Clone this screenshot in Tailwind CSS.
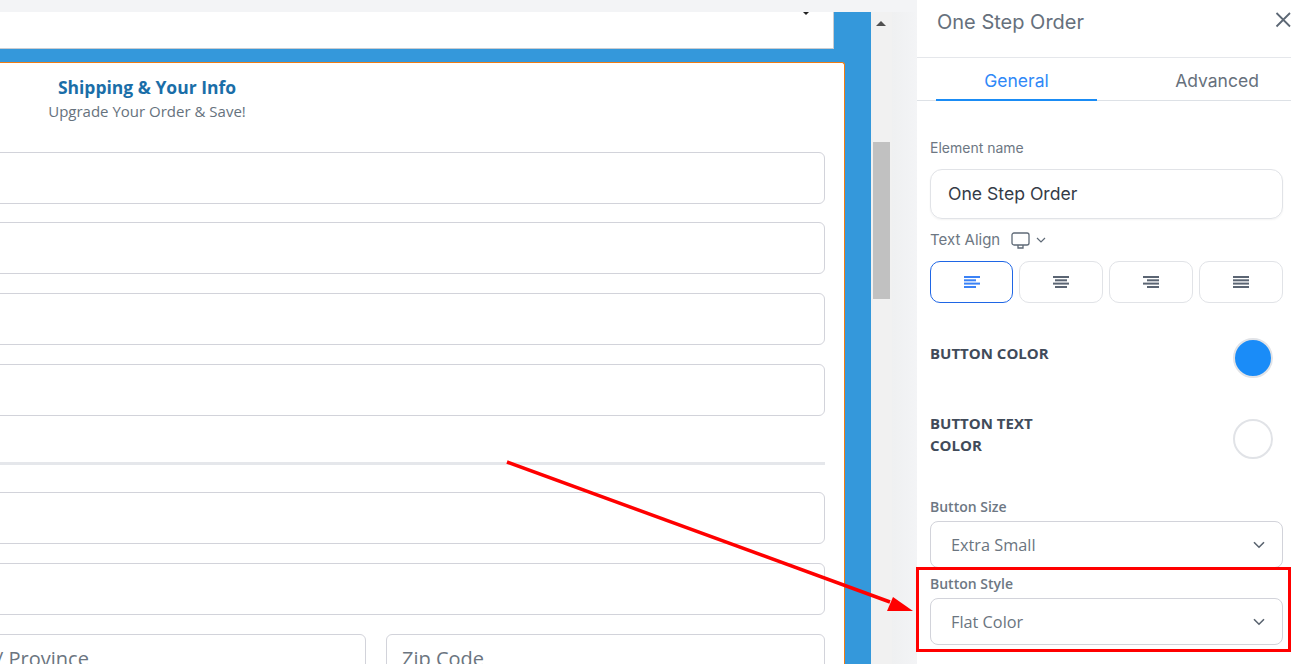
<!DOCTYPE html>
<html lang="en">
  <head>
    <meta charset="UTF-8" />
    <meta name="viewport" content="width=device-width, initial-scale=1.0" />
    <title>One Step Order</title>
    <script src="https://cdn.jsdelivr.net/npm/@tailwindcss/browser@4"></script>
  </head>
  <body class="h-[664px] overflow-hidden bg-white">
    <div class="relative flex h-[664px] w-[1291px] overflow-hidden">
      <!-- Builder canvas -->
      <div class="flex h-full w-[917px] shrink-0 flex-col overflow-hidden bg-[#f3f4f6] pt-3">
        <div class="flex min-h-0 flex-1">
          <div class="w-[871px] shrink-0 overflow-hidden bg-[#3498db] font-['Open_Sans',sans-serif]">
            <div class="relative h-[37px] w-[834px] border-r border-b border-[#c9ccd1] bg-white">
              <span class="absolute top-0 left-[803px] h-0 w-0 border-x-[3.5px] border-t-[3.5px] border-x-transparent border-t-[#222]"></span>
            </div>
            <div class="mt-[13px] -ml-[551px] h-[700px] w-[1396px] rounded-t-[3px] border-t border-r border-[#f07c13] bg-white pt-[11px] pr-[19px] pl-5">
              <h2 class="text-center text-[17.5px] leading-[26px] font-bold text-[#1a6ea8]">Shipping &amp; Your Info</h2>
              <p class="text-center text-[15px] leading-[22px] text-[#66727d]">Upgrade Your Order &amp; Save!</p>
              <div class="mt-[30px] flex flex-col gap-[19px]">
                <div class="-mb-px h-[52px] rounded-md border border-[#d2d3da]"></div>
                <div class="h-[52px] rounded-md border border-[#d2d3da]"></div>
                <div class="h-[52px] rounded-md border border-[#d2d3da]"></div>
                <div class="h-[52px] rounded-md border border-[#d2d3da]"></div>
              </div>
              <div class="mt-[46px] h-[3px] bg-[#e5e7eb]"></div>
              <div class="mt-[27px] flex flex-col gap-[19px]">
                <div class="h-[52px] rounded-md border border-[#d2d3da]"></div>
                <div class="h-[52px] rounded-md border border-[#d2d3da]"></div>
                <div class="flex justify-between">
                  <div class="h-[52px] w-[897px] rounded-md border border-[#d2d3da] pt-[9px] pl-[526px] text-[20px] whitespace-nowrap text-[#6b7580]">/ Province</div>
                  <div class="h-[52px] w-[439px] rounded-md border border-[#d2d3da] pt-[9px] pl-[15px] text-[20px] whitespace-nowrap text-[#6b7580]">Zip Code</div>
                </div>
              </div>
            </div>
          </div>
          <!-- Scrollbar -->
          <div class="relative w-[21px] shrink-0 bg-[#f1f1f1]">
            <span class="absolute top-[9px] left-[5px] h-0 w-0 border-x-[5px] border-b-[5px] border-x-transparent border-b-[#505050]"></span>
            <div class="absolute top-[130px] left-[2px] h-[157px] w-[17px] bg-[#c1c1c1]"></div>
          </div>
          <div class="flex-1 bg-linear-to-r from-[#eff0f1] to-[#f3f4f6]"></div>
        </div>
      </div>

      <!-- Settings panel -->
      <aside class="h-full min-w-0 flex-1 overflow-hidden bg-white font-['Inter',sans-serif]">
        <header class="relative h-[58px] border-b border-[#e5e7eb] pt-[9px] pl-5 text-[20px] leading-[26px] text-[#66707c]">
          One Step Order
          <svg class="absolute top-[12px] right-0 h-4 w-4 text-[#5d6875]" viewBox="0 0 16 16" fill="none" stroke="currentColor" stroke-width="1.8">
            <path d="M1.5 1L15 14.5M15 1L1.5 14.5" />
          </svg>
        </header>
        <nav class="flex h-[43px] border-b border-[#dde1e6] pl-[19px] text-[17.5px]">
          <div class="h-[43px] w-[161px] shrink-0 border-b-2 border-[#1a8cf5] pt-[10px] text-center text-[#2f88f7]">General</div>
          <div class="h-[42px] w-[240px] shrink-0 pt-[10px] text-center text-[#66707c]">Advanced</div>
        </nav>

        <div class="pr-2 pl-[13px]">
          <label class="mt-[38px] block text-[14px] leading-[18px] text-[#6d7783]">Element name</label>
          <div class="mt-[12px] flex h-[50px] items-center rounded-xl border border-[#e1e3e7] pt-px pl-[17px] text-[17.6px] text-[#343b47] shadow-xs">One Step Order</div>

          <div class="mt-[11px] flex h-[20px] items-center text-[15px] text-[#6d7783]">
            <span>Text Align</span>
            <svg class="ml-[11px] h-[17px] w-[19px]" viewBox="0 0 19 17" fill="none" stroke="#5f6a77" stroke-width="1.3">
              <rect x="1" y="1" width="17" height="12" rx="2" />
              <path d="M7 13v3h5v-3" />
            </svg>
            <svg class="ml-[6px] h-[6px] w-[10px]" viewBox="0 0 10 6" fill="none" stroke="#5f6a77" stroke-width="1.2">
              <path d="M1 1l4 4 4-4" />
            </svg>
          </div>

          <div class="mt-[11px] flex gap-[6px]">
            <div class="flex h-[42px] w-[83px] items-center justify-center rounded-[10px] border border-[#1f66e5]">
              <svg class="h-3 w-4" viewBox="0 0 16 12" fill="#3b82f6"><rect y="0" width="16" height="2" /><rect y="3.3" width="12" height="2" /><rect y="6.6" width="16" height="2" /><rect y="10" width="12" height="2" /></svg>
            </div>
            <div class="flex h-[42px] w-[84px] items-center justify-center rounded-[10px] border border-[#e1e3e7]">
              <svg class="h-3 w-4" viewBox="0 0 16 12" fill="#5b6573"><rect y="0" width="16" height="2" /><rect x="2" y="3.3" width="12" height="2" /><rect y="6.6" width="16" height="2" /><rect x="2" y="10" width="12" height="2" /></svg>
            </div>
            <div class="flex h-[42px] w-[84px] items-center justify-center rounded-[10px] border border-[#e1e3e7]">
              <svg class="h-3 w-4" viewBox="0 0 16 12" fill="#5b6573"><rect y="0" width="16" height="2" /><rect x="4" y="3.3" width="12" height="2" /><rect y="6.6" width="16" height="2" /><rect x="4" y="10" width="12" height="2" /></svg>
            </div>
            <div class="flex h-[42px] w-[84px] items-center justify-center rounded-[10px] border border-[#e1e3e7]">
              <svg class="h-3 w-4" viewBox="0 0 16 12" fill="#5b6573"><rect y="0" width="16" height="2" /><rect y="3.3" width="16" height="2" /><rect y="6.6" width="16" height="2" /><rect y="10" width="16" height="2" /></svg>
            </div>
          </div>

          <div class="font-['Open_Sans',sans-serif]">
            <div class="mt-[35px] flex items-start justify-between pr-[10px]">
              <span class="pt-[4px] text-[15px] leading-[22px] font-bold text-[#414b5a]">BUTTON COLOR</span>
              <span class="h-10 w-10 rounded-full border-2 border-[#e1e3e7] bg-[#1a8cf8]"></span>
            </div>
            <div class="mt-[41px] flex items-start justify-between pr-[10px]">
              <span class="-mt-[7px] w-[120px] text-[15px] leading-[22px] font-bold text-[#414b5a]">BUTTON TEXT COLOR</span>
              <span class="h-10 w-10 rounded-full border-2 border-[#e1e3e7] bg-white"></span>
            </div>

            <label class="mt-[39px] block text-[14px] leading-[18px] font-semibold text-[#6d7783]">Button Size</label>
            <div class="mt-[5px] flex h-[47px] items-center justify-between rounded-lg border border-[#d2d3da] pr-[17px] pl-5 text-[16.3px] text-[#6b7580]">
              <span class="pt-px">Extra Small</span>
              <svg class="h-[8px] w-[12px]" viewBox="0 0 12 8" fill="none" stroke="#59636f" stroke-width="1.6"><path d="M1 1.2l5 5 5-5" /></svg>
            </div>
            <label class="mt-[7px] block text-[14px] leading-[18px] font-semibold text-[#6d7783]">Button Style</label>
            <div class="mt-[5px] flex h-[47px] items-center justify-between rounded-lg border border-[#d2d3da] pr-[17px] pl-5 text-[16.3px] text-[#6b7580]">
              <span class="pt-px">Flat Color</span>
              <svg class="h-[8px] w-[12px]" viewBox="0 0 12 8" fill="none" stroke="#59636f" stroke-width="1.6"><path d="M1 1.2l5 5 5-5" /></svg>
            </div>
          </div>
        </div>
      </aside>

      <!-- Annotation drawn over the screenshot -->
      <div class="pointer-events-none absolute top-[567px] left-[916px] h-[85px] w-[375px] border-[3px] border-[#ff0000]"></div>
      <svg class="pointer-events-none absolute top-0 left-0" width="1291" height="664" viewBox="0 0 1291 664">
        <path d="M507 462L890 602" stroke="#ff0000" stroke-width="3.5" fill="none" />
        <path d="M913 611L887 611L893 597Z" fill="#ff0000" />
      </svg>
    </div>
  </body>
</html>
